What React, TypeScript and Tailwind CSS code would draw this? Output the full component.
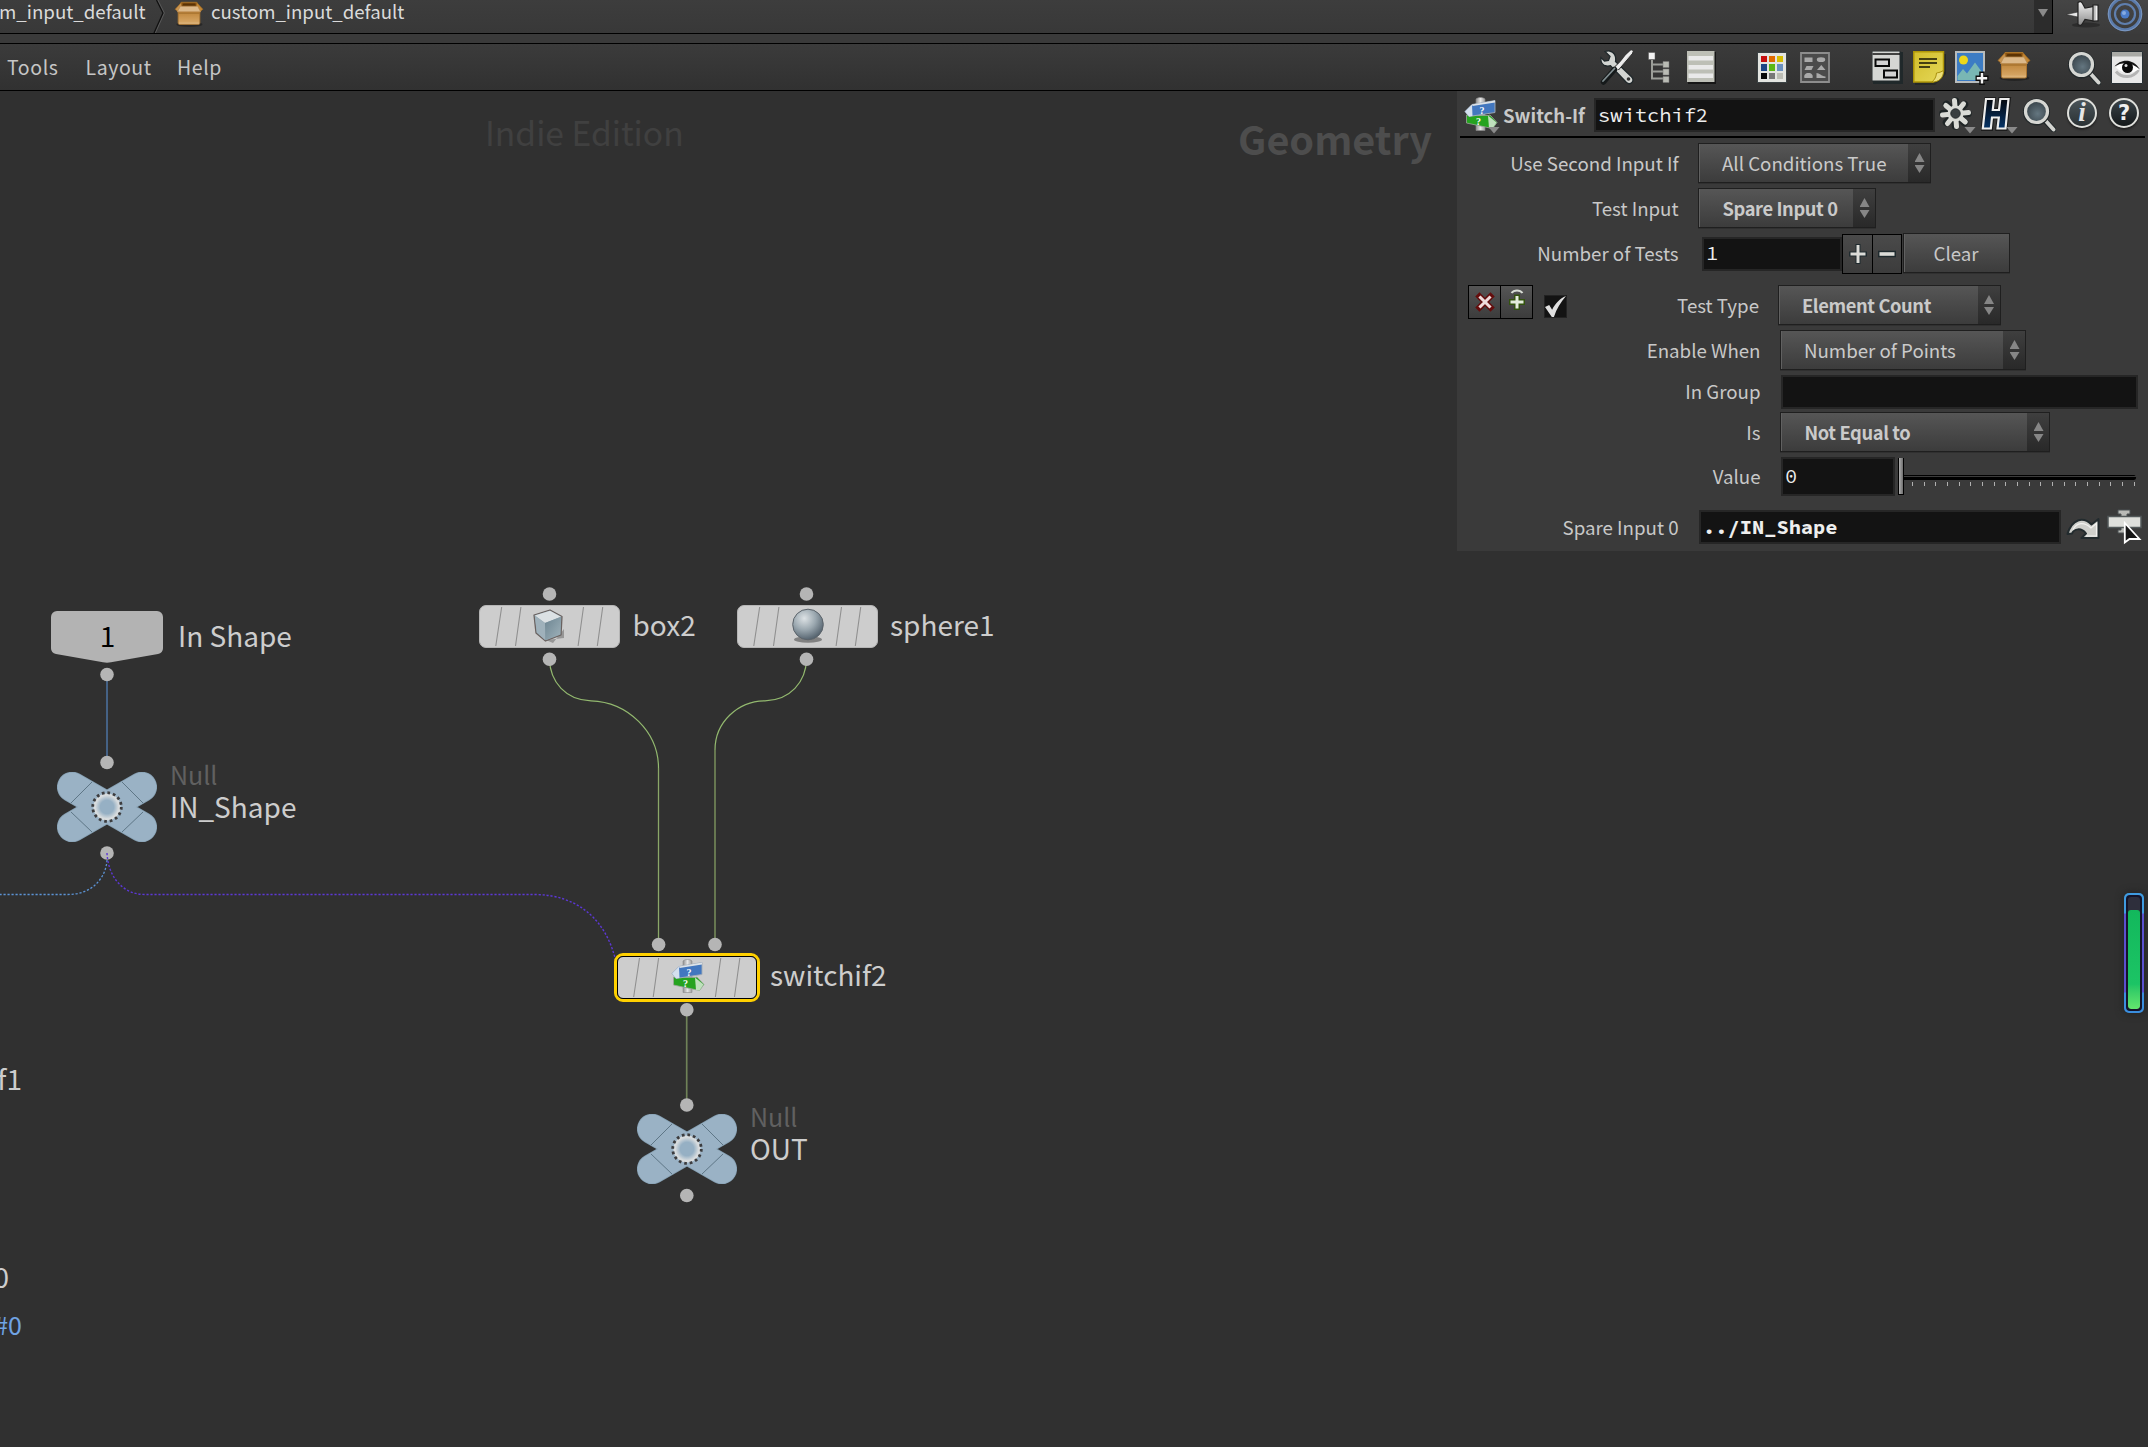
import type { ReactNode } from "react";

type IconProps = { className?: string };

/* ---------- shared icons ---------- */

function BoxIcon({ className = "" }: IconProps) {
  return (
    <svg viewBox="0 0 34 30" className={className} fill="none">
      <ellipse cx="17.500" cy="27" rx="15" ry="3" fill="#000" opacity=".3" />
      <path d="M8 1.500H26L30 8H4Z" fill="#8a5210" stroke="#a8742a" />
      <path d="M10.500 3H24L25.500 7H8.500Z" fill="#5b3304" />
      <path d="M4.500 10H29.500V25.500a1.500 1.500 0 0 1-1.500 1.500H6a1.500 1.500 0 0 1-1.500-1.500Z" fill="url(#boxFace)" stroke="#a87431" />
      <path d="M8 2 1 9.500 4 12 8.500 6Z" fill="#c99450" stroke="#a06a22" strokeWidth=".8" />
      <path d="M26 2 33 9.500 30 12 25.500 6Z" fill="#c48734" stroke="#a06a22" strokeWidth=".8" />
      <path d="M7 6H27L30.500 12.500H3.500Z" fill="#dcb98a" stroke="#b98a4e" strokeWidth=".8" />
      <path d="M5 14H29" stroke="#9c6a28" strokeWidth="1" />
      <defs>
        <linearGradient id="boxFace" x1="0" y1="0" x2="0" y2="1">
          <stop offset="0" stopColor="#ba7e31" />
          <stop offset=".8" stopColor="#d4a361" />
          <stop offset="1" stopColor="#e2bd88" />
        </linearGradient>
      </defs>
    </svg>
  );
}

function MagnifierIcon() {
  return (
    <svg viewBox="0 0 33 34" className="h-[34px] w-[33px]" fill="none">
      <path d="m21.500 22 9 9.500" stroke="#23292b" strokeWidth="6" strokeLinecap="round" />
      <path d="m21.500 21.500 9 10" stroke="#d3d4d0" strokeWidth="3.800" strokeLinecap="round" />
      <circle cx="13.500" cy="14" r="12.300" fill="#3f4a50" stroke="#22282a" strokeWidth="2.500" />
      <circle cx="13.500" cy="13.500" r="11" fill="url(#lens)" stroke="#d6d7d3" strokeWidth="3.200" />
      <defs>
        <radialGradient id="lens" cx=".55" cy=".6">
          <stop offset="0" stopColor="#647680" />
          <stop offset="1" stopColor="#3f4b52" />
        </radialGradient>
      </defs>
    </svg>
  );
}

function SignpostIcon({ className = "" }: IconProps) {
  return (
    <svg viewBox="0 0 34 35" className={className} fill="none">
      <path d="M12 2c2-2 7-2 9 0v31.500h-9Z" fill="url(#pole)" stroke="#8c8c8c" strokeWidth=".6" />
      <path d="M2.500 18 24 18.500 26 18 33 25.500 28.500 31.500 26 31 2.500 26Z" fill="#25a31f" stroke="#9fa59e" strokeWidth=".8" />
      <path d="M24 18.500 32.500 25.500 28.500 31.500 25 31Z" fill="#bfe0bd" />
      <path d="M31 3.500 8 7.500 1 14.500 5 19.500 31 15.500Z" fill="#4277bf" stroke="#a3adb8" strokeWidth=".9" />
      <path d="M8 7.500 1 14.500 5 19.500 8.500 19Z" fill="#d4e0ee" />
      <path d="M8 7.500 31 3.500V5.500L8.500 9Z" fill="#dde2e6" />
      <text x="15.500" y="16.500" fontSize="10" fontWeight="700" fill="#fff" fontFamily="Liberation Serif, serif">?</text>
      <text x="12" y="27.500" fontSize="10" fontWeight="700" fill="#fff" fontFamily="Liberation Serif, serif">?</text>
      <defs>
        <linearGradient id="pole">
          <stop offset="0" stopColor="#8f8f8f" />
          <stop offset=".5" stopColor="#e6e6e6" />
          <stop offset="1" stopColor="#9a9a9a" />
        </linearGradient>
      </defs>
    </svg>
  );
}

function MenuTriangle() {
  return <span className="absolute -right-px bottom-0 h-[7px] w-3 bg-[#8a8a8a] [clip-path:polygon(0_0,100%_0,50%_100%)]" />;
}

/* ---------- path bar ---------- */

function PathBar() {
  return (
    <div className="flex h-[34px] shrink-0 items-start bg-linear-to-b from-[#454545] to-[#3b3b3b]">
      <div className="flex h-[34px] w-[2053px] items-start border-r border-b border-black bg-linear-to-b from-[#3d3d3d] to-[#383838]">
        <div className="flex h-[22px] w-[150px] items-center text-[18.7px]/none whitespace-nowrap text-[#dadada]">
          <span className="-ml-px">m_input_default</span>
        </div>
        <svg viewBox="0 0 16 33" className="h-[33px] w-4" fill="none">
          <path d="M7.500 0 14 13 5 33" stroke="#5a5a5a" strokeWidth="1.500" />
          <path d="M6.500 0 13 13 4 33" stroke="#111" strokeWidth="1.300" />
        </svg>
        <BoxIcon className="mt-px ml-[5px] h-[26px] w-9" />
        <div className="ml-1 flex h-[22px] items-center text-[18.65px]/none whitespace-nowrap text-[#dadada]">custom_input_default</div>
        <div className="ml-auto flex h-[33px] w-[18px] justify-center bg-[#2c2c2c] pt-[9px]">
          <span className="h-2 w-[10px] bg-[#8a8a8a] [clip-path:polygon(0_0,100%_0,50%_100%)]" />
        </div>
      </div>
      <svg viewBox="0 0 34 28" className="ml-[13px] h-7 w-[34px]" fill="none">
        <ellipse cx="20" cy="25" rx="14" ry="2.500" fill="#222" opacity=".6" />
        <path d="M0 14.500 12 12v5Z" fill="#e8e8e8" stroke="#333" strokeWidth=".6" />
        <path d="M12 2.500c2-1.500 3.500-1 4.500 1l2.500 4.500 9-1.500V21l-9-1.500-2.500 4c-1 2-2.500 2.500-4.500 1Z" fill="url(#pin)" stroke="#222" strokeWidth="1.200" />
        <path d="M27 5h5v16h-5Z" fill="#bdbdbd" stroke="#222" strokeWidth="1.200" />
        <path d="M30.500 6v14" stroke="#f0f0f0" strokeWidth="1.500" />
        <defs>
          <linearGradient id="pin" x1="0" y1="0" x2="0" y2="1">
            <stop offset="0" stopColor="#f4f4f4" />
            <stop offset="1" stopColor="#8b8b8b" />
          </linearGradient>
        </defs>
      </svg>
      <svg viewBox="0 0 36 36" className="-mt-1 ml-[7px] size-9" fill="none">
        <circle cx="18" cy="18" r="15.700" stroke="#5b7bab" strokeWidth="3" />
        <circle cx="18" cy="18" r="16.800" stroke="#8aa5cc" strokeWidth=".7" />
        <circle cx="18" cy="18" r="10" stroke="#5f7fae" strokeWidth="2.200" />
        <circle cx="18" cy="18" r="4.500" fill="#4a7bc8" />
        <circle cx="17" cy="17" r="2" fill="#86abe0" />
      </svg>
    </div>
  );
}

/* ---------- menu bar ---------- */

const swatches = ["#c40d0d", "#e06a00", "#d6bd00", "#1d4585", "#5cb814", "#6a90bf", "#080808", "#777", "#bcbdb5"];

function MenuBar() {
  return (
    <div className="flex h-[48px] shrink-0 items-center border-y border-black bg-linear-to-b from-[#3b3b3b] to-[#313131] pr-[5px] pb-px pl-[7px] text-[#c6c6c6]">
      <nav className="flex text-[19.5px]/none tracking-[0.6px]">
        <span className="w-[78.5px]">Tools</span>
        <span className="w-[91.5px]">Layout</span>
        <span>Help</span>
      </nav>
      <div className="ml-auto flex items-center pt-0.5">
        {/* wrench and screwdriver */}
        <svg viewBox="0 0 34 35" className="h-[35px] w-[34px]" fill="none">
          <path d="M5 1.500 10 6.500 8.500 10.500 4.500 11 1 7.500c-.8 4.500 1.500 8 5.500 8.500 1.500.2 3 0 4-.3L26 32c2 2 4.500 2 6 .5s1.300-4-.5-5.800L15.500 11.500C16.500 6 14 1.500 9.500 1 8 .8 6.500 1 5 1.500Z" fill="#d3d5d2" stroke="#20282b" strokeWidth="1.300" />
          <circle cx="28.500" cy="29" r="1.800" fill="#333" />
          <path d="M31 1 33 3 18.500 20 15 16.500Z" fill="#dfdfdf" stroke="#2a2a2a" strokeWidth="1" />
          <path d="m31.500 1.500-5 4.500-9.500 12.500" stroke="#eee" strokeWidth="2.500" strokeLinecap="round" />
          <path d="M14.500 19.500 3.500 32" stroke="#15191a" strokeWidth="5.500" strokeLinecap="round" />
          <path d="M14.500 18.500 3 31" stroke="#7f8c8f" strokeWidth="1.800" strokeLinecap="round" />
        </svg>
        {/* tree */}
        <svg viewBox="0 0 22 31" className="ml-[14px] h-[31px] w-[22px]" fill="none">
          <path d="M4 8v18.500h12M4 12.500h12M4 19.500h12" stroke="#9c9e99" strokeWidth="2" />
          <path d="M.5.500h6.500v7H.5Z" fill="#f2f2f2" stroke="#555" strokeWidth=".5" />
          <path d="M15 9.500h6v6h-6ZM15 17h6v6h-6ZM15 24.500h6v6h-6Z" fill="#b9bbb4" stroke="#777" strokeWidth=".5" />
        </svg>
        {/* list */}
        <svg viewBox="0 0 29 33" className="ml-[17px] h-[33px] w-[29px]">
          <path d="M1 1H29V33H1Z" fill="#161616" />
          <path d="M0 0H27.500V31H0Z" fill="#bdbfb6" />
          <path d="M1.500 5h24.500v4.500H1.500ZM1.500 14h24.500v4.500H1.500ZM1.500 22.500h24.500V27H1.500Z" fill="#e9e9e9" />
        </svg>
        {/* colour palette */}
        <div className="ml-[41px] grid h-[31px] w-[30px] grid-cols-3 gap-[2px] border border-[#3b4244] bg-[#e3e4e0] p-[3px]">
          {swatches.map((c) => (
            <span key={c} style={{ backgroundColor: c }} />
          ))}
        </div>
        {/* shape palette */}
        <svg viewBox="0 0 30 31" className="ml-[13px] h-[31px] w-[30px]" fill="none">
          <path d="M1 1H29V30H1Z" fill="#4b4b4b" stroke="#8d8d8d" strokeWidth="1.800" />
          <path d="M4.500 5.500h8v4.500h-8ZM6.500 14h7l-2 4h-7ZM17 18h8.500l-4.200-5ZM16.500 26v-5c3 0 4.500 3 9 3.500V26ZM4.500 26c-1-3 1-5 4-5s5 2 4 5Z" fill="#a9a9a9" />
          <ellipse cx="21" cy="7.700" rx="4.200" ry="2.400" fill="#a9a9a9" />
        </svg>
        {/* network overview */}
        <svg viewBox="0 0 31 33" className="ml-[42px] h-[33px] w-[31px]" fill="none">
          <path d="M1 1H31V33H1Z" fill="#20282a" />
          <path d="M0 0H28V30H0Z" fill="#d5d6d3" stroke="#222a2c" />
          <path d="M.5 3h27.500" stroke="#111" strokeWidth="1.500" />
          <path d="M3.500 8.500h13.500v6.500H3.500ZM12 19.500h13v7H12Z" fill="#d2d2d2" stroke="#080808" strokeWidth="2" />
        </svg>
        {/* sticky note */}
        <svg viewBox="0 0 33 34" className="ml-[9.500px] h-[34px] w-[33px]" fill="none">
          <path d="M2 3H33V23L22 34H2Z" fill="#1f2323" opacity=".7" />
          <path d="M.8.800H30.500V20.500L20 31H.8Z" fill="url(#note)" stroke="#b09708" strokeWidth="1.500" />
          <path d="M30.500 19.500c-4 2.500-6 2-7 2.500-.5 3-.5 5-4.500 9 6 .5 12-4 11.500-11.500Z" fill="#ecdf7a" stroke="#a78e08" />
          <path d="M6 8h18M6 12h18M6 16h11" stroke="#161405" strokeWidth="1.600" />
          <defs>
            <linearGradient id="note" x1="0" y1="0" x2="1" y2="1">
              <stop offset="0" stopColor="#d2bd2c" />
              <stop offset="1" stopColor="#e5d858" />
            </linearGradient>
          </defs>
        </svg>
        {/* background image */}
        <svg viewBox="0 0 34 34" className="ml-[9px] h-[34px] w-[34px]" fill="none">
          <path d="M1 1H29V31H1Z" fill="#3c7cc4" stroke="#b8bcbd" strokeWidth="2" />
          <circle cx="8.500" cy="9" r="4.500" fill="#ecd61c" />
          <path d="M2.500 29V25L8 18l4 4.500 8-11 8 11V29Z" fill="#79b7b4" />
          <path d="M27 20.500v13.500M20.500 27.300H33.500" stroke="#0c0c0c" strokeWidth="5.500" />
          <path d="M27 22v10.500M21.800 27.300H32.200" stroke="#f2f2f2" strokeWidth="2.500" />
        </svg>
        <BoxIcon className="-mt-1 ml-[8px] h-[30px] w-[34px]" />
        <div className="ml-[37.500px]">
          <MagnifierIcon />
        </div>
        {/* view options */}
        <svg viewBox="0 0 32 33" className="ml-[10px] h-[33px] w-8" fill="none">
          <path d="M.5.500H31.500V32.500H.5Z" fill="#e8e8e8" stroke="#283034" />
          <path d="M1 1H31V5.500H1Z" fill="#a9aaa6" />
          <path d="M5 20.500c6 7 17 7 22.500-1.500" stroke="#b4b4b4" strokeWidth="3" />
          <path d="M5 16.500C10 9.500 21 9 28 18 20 24 11 23 5 16.500Z" fill="#fff" />
          <path d="M3.500 15.500C9 8 22 6.500 29 18.500 20 10.500 11 11 3.500 15.500Z" fill="#161616" />
          <circle cx="16.500" cy="16.500" r="5.500" fill="#0a0a0a" />
          <circle cx="15" cy="14.500" r="1.500" fill="#ddd" />
        </svg>
      </div>
    </div>
  );
}

/* ---------- parameter panel ---------- */

function TextField({ className = "", children }: { className?: string; children?: ReactNode }) {
  return (
    <div className={`flex shrink-0 items-center border-2 border-[#262626] bg-[#131313] pl-0.5 font-['Source_Code_Pro','Liberation_Mono',monospace] text-[20.4px]/none whitespace-pre text-[#eee] ${className}`}>
      {children}
    </div>
  );
}

function Combo({ className = "", bold = false, children }: { className?: string; bold?: boolean; children: ReactNode }) {
  return (
    <div className={`flex h-10 shrink-0 border border-[#1f1f1f] bg-linear-to-b from-[#565656] to-[#3c3c3c] shadow-[inset_1px_0_0_#616161,0_1px_0_#303030] ${className}`}>
      <span className={`flex flex-1 items-center whitespace-nowrap text-[#cacaca] ${bold ? "pl-[23.500px] text-[18.3px]/none font-bold tracking-[-0.38px]" : "pl-[23px]"}`}>{children}</span>
      <span className="flex w-[22px] flex-col items-center justify-center gap-[3px] bg-linear-to-b from-[#3f3f3f] to-[#292929] pl-px">
        <i className="h-[9px] w-[10px] bg-[#868686] [clip-path:polygon(50%_0,100%_100%,0_100%)]" />
        <i className="h-2 w-[10px] bg-[#868686] [clip-path:polygon(0_0,100%_0,50%_100%)]" />
      </span>
    </div>
  );
}

function Label({ nested = false, children }: { nested?: boolean; children: ReactNode }) {
  return <span className={`shrink-0 pr-[0.5px] text-right whitespace-nowrap ${nested ? "w-[304px]" : "w-[222px]"}`}>{children}</span>;
}

const ticks = Array.from({ length: 20 }, (_, i) => i);

function ParameterPanel() {
  return (
    <section className="absolute top-0 right-0 h-[460px] w-[691px] bg-[#3a3a3a] text-[18.7px]/none text-[#c8c8c8]">
      <header className="mx-[3px] flex h-[47px] items-center border-b-2 border-black pt-[3px]">
        <div className="flex w-[134px] items-center pl-[4px]">
          <span className="relative h-[37px] w-[35px]">
            <SignpostIcon className="h-[35px] w-[34px]" />
            <MenuTriangle />
          </span>
          <span className="ml-1 text-[18.5px]/none font-bold whitespace-nowrap">Switch-If</span>
        </div>
        <TextField className="h-[34px] w-[341px]">switchif2</TextField>
        <span className="relative ml-1 h-[37px] w-9">
          <svg viewBox="0 0 34 34" className="size-[34px]" fill="none">
            <g stroke="#1f2526" strokeWidth="7.500" strokeLinecap="round">
              <path d="M16.500 4v25M4 16.500h25M7.500 7.500l18 18M25.500 7.500l-18 18" />
            </g>
            <g stroke="#dadbd6" strokeWidth="5" strokeLinecap="round">
              <path d="M15.500 3.500 17.500 29.500M3.500 18 29.500 15.500M6.800 8.500l19.500 16.500M24.500 6.800 8.500 26.500" />
            </g>
            <circle cx="16.500" cy="16.500" r="8" fill="#dadbd6" />
            <circle cx="16.500" cy="16.500" r="4.700" fill="#3a3f41" stroke="#23292b" />
          </svg>
          <MenuTriangle />
        </span>
        <span className="relative ml-[6px] h-[37px] w-9">
          <svg viewBox="0 0 32 34" className="h-[34px] w-8" fill="none">
            <path d="M5.500 1.500H13L11.800 12.500H18L19.300 1.500H28L24.500 32H16.500L17.800 20.500H11.200L10 32H1.500Z" fill="url(#hfill)" stroke="#1c1c1c" strokeWidth="4" />
            <path d="M5 2H13L11.800 13H18L19.300 2H27.500L24.500 31.500H16.500L17.800 20.500H11L9.800 31.500H1.800Z" fill="url(#hfill)" stroke="#ededed" strokeWidth="2.200" />
            <defs>
              <linearGradient id="hfill" x1="0" y1="0" x2="0" y2="1">
                <stop offset="0" stopColor="#05080e" />
                <stop offset="1" stopColor="#063468" />
              </linearGradient>
            </defs>
          </svg>
          <MenuTriangle />
        </span>
        <span className="ml-[6px]">
          <MagnifierIcon />
        </span>
        <span className="mb-1 ml-[11px] flex size-[30px] items-center justify-center rounded-full border-[2.500px] border-[#dfe0dc] bg-linear-to-b from-[#4a5459] to-[#2b3235] pb-0.5 font-['Liberation_Serif',serif] text-[27px]/none font-bold text-[#e6e6e6] italic shadow-[0_2px_2px_#222]">i</span>
        <span className="mb-1 ml-3 flex size-[30px] items-center justify-center rounded-full border-[2.500px] border-[#dfe0dc] bg-linear-to-b from-[#3a4348] to-[#15191b] font-['DejaVu_Sans',sans-serif] text-[21px]/none font-bold text-[#efefef] shadow-[0_2px_2px_#222]">?</span>
      </header>

      <div className="mt-[5px] flex h-10 items-center">
        <Label>Use Second Input If</Label>
        <Combo className="ml-[19px] w-[233px]">All Conditions True</Combo>
      </div>
      <div className="mt-[5px] flex h-10 items-center">
        <Label>Test Input</Label>
        <Combo bold className="ml-[19px] w-[178px]">Spare Input 0</Combo>
      </div>
      <div className="mt-[5px] flex h-[41px] items-center">
        <Label>Number of Tests</Label>
        <TextField className="ml-[23px] h-[34px] w-[140px]">1</TextField>
        <div className="flex h-10 w-[60px] border border-black bg-linear-to-b from-[#4a4a4a] to-[#3c3c3c]">
          <span className="flex flex-1 items-center justify-center border-r border-black pl-px">
            <svg viewBox="0 0 20 22" className="h-[22px] w-5" fill="none">
              <path d="M10 1v20M1 11h18" stroke="#1f2a2e" strokeWidth="5" />
              <path d="M10 2v18M2.500 11h15" stroke="#dcdcd8" strokeWidth="3" />
            </svg>
          </span>
          <span className="flex flex-1 items-center justify-center pl-px">
            <svg viewBox="0 0 20 22" className="h-[22px] w-5" fill="none">
              <path d="M1 11h18" stroke="#1f2a2e" strokeWidth="6.500" />
              <path d="M2.500 11h15" stroke="#dcdcd8" strokeWidth="3.600" />
            </svg>
          </span>
        </div>
        <div className="mb-px ml-px flex h-10 w-[107px] items-center justify-center border border-[#1f1f1f] bg-linear-to-b from-[#565656] to-[#3c3c3c] pr-px shadow-[inset_1px_0_0_#616161,0_1px_0_#303030]">Clear</div>
      </div>

      <div className="mt-[11px] flex h-10">
        <div className="ml-[11px] flex h-[34px] w-[65px] border border-black bg-linear-to-b from-[#555] to-[#3c3c3c]">
          <span className="flex flex-1 items-center justify-center border-r border-black pl-px">
            <svg viewBox="0 0 20 20" className="-mt-px size-5" fill="none">
              <path d="M4.500 4.500l11 11M15.500 4.500l-11 11" stroke="#640c0c" strokeWidth="6" strokeLinecap="square" />
              <path d="M5.500 5.500l9 9M14.500 5.500l-9 9" stroke="#efdcdc" strokeWidth="3" strokeLinecap="square" />
            </svg>
          </span>
          <span className="flex flex-1 items-center justify-center pl-px">
            <svg viewBox="0 0 20 24" className="-mt-1 h-6 w-5" fill="none">
              <path d="M10 6.500v15.500M2 14h16" stroke="#33530e" strokeWidth="5.800" />
              <path d="M10 8v12.500M3.500 14h13" stroke="#e4ecdc" strokeWidth="3" />
              <path d="M4.500 5C7 1.500 13 1.500 15.500 5" stroke="#d8dcd4" strokeWidth="2" />
            </svg>
          </span>
        </div>
        <div className="mt-2.5 ml-[11px] flex size-[23px] items-center justify-center border border-[#222] bg-[#131313]">
          <svg viewBox="0 0 20 20" className="size-[21px]">
            <path d="M0 10.500 4 8.500 6.800 13C10 7 14 2.500 20 0 15 6 11 12 8.500 20H6.500Z" fill="#e0e0e0" />
          </svg>
        </div>
        <span className="flex w-[192px] items-center justify-end">Test Type</span>
        <Combo bold className="ml-[18.500px] w-[223px]">Element Count</Combo>
      </div>
      <div className="mt-[5px] flex h-10 items-center">
        <Label nested>Enable When</Label>
        <Combo className="ml-[19px] w-[246px]">Number of Points</Combo>
      </div>
      <div className="mt-[5px] flex h-[34px] items-start">
        <Label nested>
          <span className="inline-block pt-[6.500px]">In Group</span>
        </Label>
        <TextField className="ml-5 h-[34px] w-[357px]" />
      </div>
      <div className="mt-[3px] flex h-10 items-center">
        <Label nested>Is</Label>
        <Combo bold className="ml-[19px] w-[270px]">Not Equal to</Combo>
      </div>
      <div className="mt-[5px] flex h-[39px] items-center">
        <Label nested>Value</Label>
        <TextField className="ml-5 h-[39px] w-[114px]">0</TextField>
        <div className="ml-[3px] h-[37px] w-[6px] border-r border-b border-l border-black bg-linear-to-r from-[#b0b0b0] to-[#6e6e6e]" />
        <div className="mt-[18px] h-[22px] w-[232px]">
          <div className="h-[5px] rounded-r-sm border-t border-black bg-black">
            <div className="h-px bg-[#3c3c3c]" />
          </div>
          <div className="mt-[2px] flex justify-between pr-px pl-2">
            {ticks.map((t) => (
              <span key={t} className="h-1 w-px bg-[#b0b0b0]" />
            ))}
          </div>
        </div>
      </div>
      <div className="mt-[14px] flex h-[34px] items-center">
        <Label>Spare Input 0</Label>
        <TextField className="ml-5 h-[34px] w-[362px] font-bold">../IN_Shape</TextField>
        {/* jump to operator */}
        <svg viewBox="0 0 34 23" className="mt-[3px] ml-[5px] h-[23px] w-[34px]" fill="none">
          <path d="M1.500 17C6 2 17-1 25.500 7.500L32.500 2V21H15.500l4.500-4.500C15 10 8 12 6 16.500Z" fill="#cfd0cc" stroke="#222b2e" strokeWidth="2" strokeLinejoin="round" />
          <path d="M7 12.500C11 5.500 18 4.500 25 11L30.500 6.500v12.500H20" stroke="#f2f2f0" strokeWidth="1.200" />
        </svg>
        {/* operator chooser with the mouse pointer over it */}
        <svg viewBox="0 0 36 36" className="ml-[7px] h-9 w-9" fill="none">
          <path d="M11 1h12v4h-3v3h-6V5h-3ZM14 17h6v4h3v3H11v-3h3Z" fill="#b9bab6" stroke="#4a5052" />
          <path d="M1 7.500H34V18.500H1Z" fill="#dedfdb" stroke="#525859" strokeWidth="1.500" />
          <path d="M17.800 14V33.500L22.500 30H32.500Z" fill="#161616" stroke="#fff" strokeWidth="1.800" strokeLinejoin="miter" />
        </svg>
      </div>
    </section>
  );
}

/* ---------- network ---------- */

function CubeIcon() {
  return (
    <svg viewBox="0 0 34 34" className="h-[34px] w-[34px]" fill="none">
      <path d="M13 31 31 29V20L20 34Z" fill="#555" opacity=".45" />
      <path d="M1 6 17 1 29 7.500 28 26 12.500 32 3 24Z" fill="#8fa3ad" stroke="#6a6260" strokeWidth="1.300" strokeLinejoin="round" />
      <path d="M1.800 6.500 17 1.800 28 7.800 12 14Z" fill="#dce1e4" />
      <path d="M1.800 6.500 12 14V31L3.800 23.500Z" fill="#9fb1bb" />
      <path d="M12 14 28 7.800 27.300 25.300 12.500 31Z" fill="url(#cube)" />
      <defs>
        <linearGradient id="cube" x1="0" y1="0" x2="1" y2="1">
          <stop offset="0" stopColor="#6c8491" />
          <stop offset="1" stopColor="#a0b3bb" />
        </linearGradient>
      </defs>
    </svg>
  );
}

function SphereIcon() {
  return (
    <svg viewBox="0 0 34 36" className="h-9 w-[34px]" fill="none">
      <ellipse cx="17" cy="31.500" rx="14" ry="3.200" fill="#444" opacity=".55" />
      <circle cx="17" cy="16.500" r="15.300" fill="url(#ball)" stroke="#5b636a" strokeWidth="1" />
      <defs>
        <radialGradient id="ball" cx=".38" cy=".3" r=".75">
          <stop offset="0" stopColor="#dde2e5" />
          <stop offset=".5" stopColor="#9aa7af" />
          <stop offset="1" stopColor="#4c5a66" />
        </radialGradient>
      </defs>
    </svg>
  );
}

function TileStripes() {
  return (
    <svg viewBox="0 0 141 43" className="absolute inset-0 size-full" preserveAspectRatio="none">
      <path d="M22 1 16 42M41.500 1 36 42M105 1 99.500 42M124.500 1 119 42" stroke="#8f8f8f" strokeWidth="1.100" />
    </svg>
  );
}

function TileNode({ className, label, children }: { className: string; label: string; children: ReactNode }) {
  return (
    <div className={`absolute flex items-center ${className}`}>
      <div className="relative flex h-[43px] w-[141px] items-center justify-center rounded-[7px] border border-[#b5b5b5] bg-[#cdcdcd]">
        <TileStripes />
        <div className="relative -mt-0.5 ml-px">{children}</div>
      </div>
      <span className="mb-[5px] ml-[12.500px] text-[28px]/none text-[#cdcdcd]">{label}</span>
    </div>
  );
}

function NullNode({ className, label }: { className: string; label: string }) {
  return (
    <div className={`absolute flex items-start ${className}`}>
      <svg viewBox="-50 -35 100 70" className="mt-[11px] h-[70px] w-[100px]" fill="none">
        <path d="M-34.800-20 34.800 20M34.800-20-34.800 20" stroke="#86a0b3" strokeWidth="30.500" strokeLinecap="round" />
        <path d="M-34.800-20 34.800 20M34.800-20-34.800 20" stroke="#9ab2c5" strokeWidth="29" strokeLinecap="round" />
        <path d="M-15-25-36-4M15-25 36-4M-36 5-15 25M36 5 15 25" stroke="#5e7686" strokeWidth="1" />
        <circle r="13.500" fill="url(#hub)" />
        <circle r="14.300" stroke="#3c3c3e" strokeWidth="2.800" strokeDasharray="2.700 2.915" />
        <defs>
          <radialGradient id="hub">
            <stop offset=".5" stopColor="#96b0c4" />
            <stop offset=".85" stopColor="#d5dadd" />
            <stop offset="1" stopColor="#dcdfe0" />
          </radialGradient>
        </defs>
      </svg>
      <div className="mt-px ml-[13px] whitespace-nowrap">
        <div className="text-[25px]/none text-[#606060]">Null</div>
        <div className="mt-[4.500px] text-[28px]/none text-[#cdcdcd]">{label}</div>
      </div>
    </div>
  );
}

const connectors: [number, number][] = [
  [107, 674.5], [107, 762.5], [107, 853], [549.5, 594], [549.5, 659.3], [806.5, 594], [806.5, 659.3],
  [658.6, 944.5], [715, 944.5], [686.8, 1009.8], [686.8, 1105], [686.8, 1195.5],
];

function Wires() {
  return (
    <svg viewBox="0 91 2148 1356" className="absolute inset-0 h-[1356px] w-[2148px]" fill="none">
      <path d="M107 674V762" stroke="#48688f" strokeWidth="1.800" />
      <path d="M549.500 659C550 682 566 700.500 591 700.800C628 702 658.500 732 658.500 768" stroke="#93b96f" strokeWidth="1.200" />
      <path d="M658.500 768V944" stroke="#8aa768" strokeWidth="1.300" />
      <path d="M806.500 659C806 682 790 700.500 765 700.800C738 701 715 722 715 750" stroke="#93b96f" strokeWidth="1.200" />
      <path d="M715 750V944" stroke="#7e965f" strokeWidth="1.400" />
      <path d="M686.700 1010V1105" stroke="#6f8258" strokeWidth="1.700" />
      {connectors.map(([x, y]) => (
        <circle key={`${x}-${y}`} cx={x} cy={y} r="6.800" fill="#b5b5b5" />
      ))}
      <path d="M107 860C106 878 92 894.500 68 894.500H0" stroke="#5c93d4" strokeWidth="1.300" strokeDasharray="2.200 1.800" />
      <path d="M107 853C108 876 122 894.500 145 894.500H534C578 894.500 606 920 615.500 960V972" stroke="#5c38d4" strokeWidth="1.400" strokeDasharray="2.200 1.800" />
    </svg>
  );
}

export default function App() {
  return (
    <div className="flex h-[1447px] w-[2148px] flex-col overflow-hidden bg-[#303030] font-['Noto_Sans_CJK_SC',sans-serif]">
      <PathBar />
      <div className="h-[9px] shrink-0 bg-[#3a3a3a]" />
      <MenuBar />
      <main className="relative flex-1 overflow-hidden bg-[#303030]">
        <span className="absolute top-[24px] left-[485px] text-[33.6px]/none text-[#404040]">Indie Edition</span>
        <span className="absolute top-[27px] left-[1238px] text-[39.6px]/none font-bold text-[#4d4d4d]">Geometry</span>

        <Wires />

        <div className="absolute top-[520px] left-[51px] flex items-center">
          <div className="relative flex h-[52px] w-28 justify-center">
            <svg viewBox="0 0 112 52" className="absolute inset-0 size-full">
              <path d="M6 0H106a6 6 0 0 1 6 6V37a6 6 0 0 1-5 6L60 51.300a20 20 0 0 1-8 0L5 43a6 6 0 0 1-5-6V6a6 6 0 0 1 6-6Z" fill="#b3b3b3" />
            </svg>
            <span className="relative mt-[10px] ml-px text-[28px]/none text-black">1</span>
          </div>
          <span className="mb-1 ml-[15px] text-[28px]/none whitespace-nowrap text-[#cdcdcd]">In Shape</span>
        </div>

        <TileNode className="top-[514px] left-[479px]" label="box2">
          <CubeIcon />
        </TileNode>
        <TileNode className="top-[514px] left-[736.5px]" label="sphere1">
          <SphereIcon />
        </TileNode>

        <NullNode className="top-[670px] left-[57px]" label="IN_Shape" />

        <div className="absolute top-[862px] left-[614px] flex items-center">
          <div className="rounded-[9px] border-[3px] border-[#ffd000]">
            <div className="relative flex h-[43px] w-[140px] items-center justify-center rounded-[6px] border-[1.500px] border-black bg-[#cdcdcd]">
              <TileStripes />
              <SignpostIcon className="relative -mt-0.5 ml-px h-[35px] w-[34px]" />
            </div>
          </div>
          <span className="mb-[5px] ml-[10px] text-[27.9px]/none text-[#cdcdcd]">switchif2</span>
        </div>

        <NullNode className="top-[1012px] left-[637px]" label="OUT" />

        {/* partly visible nodes at the left edge */}
        <span className="absolute top-[973px] right-[2126px] text-[28px]/none whitespace-nowrap text-[#cdcdcd]">switchif1</span>
        <span className="absolute top-[1171px] right-[2139px] text-[28px]/none whitespace-nowrap text-[#cdcdcd]">0</span>
        <span className="absolute top-[1221px] right-[2126px] text-[25px]/none whitespace-nowrap text-[#70a4e4]">#0</span>

        {/* level meter */}
        <div className="absolute top-[802px] right-[4.500px] h-[120px] w-5 rounded-[5px] bg-[linear-gradient(#3f9be0_0_20px,#5a50cf_21px_99px,#3a8ede_100px)] p-[2px] shadow-[0_0_6px_2px_#272727]">
          <div className="h-full rounded-[4px] bg-[#14142a] p-[2px]">
            <div className="flex h-full flex-col justify-end overflow-hidden rounded-[3px] bg-[#2e2f3c]">
              <div className="h-[99px] rounded-[3px] bg-linear-to-b from-[#12b85c] via-[#1cc465] via-75% to-[#62e66e]" />
            </div>
          </div>
        </div>

        <ParameterPanel />
      </main>
    </div>
  );
}
